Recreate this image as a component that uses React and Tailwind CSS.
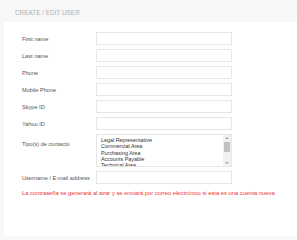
import React from "react";

const fields = ["First name", "Last name", "Phone", "Mobile Phone", "Skype ID", "Yahoo ID"];
const contactTypes = ["Legal Representative", "Commercial Area", "Purchasing Area", "Accounts Payable", "Technical Area"];

function Row({ label, children, top }) {
  return (
    <div className={`flex ${top ? "items-start" : "items-center"}`}>
      <div className={`w-[74px] text-[5.6px] text-[#555] ${top ? "pt-[6px]" : "pt-[2px]"}`}>{label}</div>
      {children}
    </div>
  );
}

function Input() {
  return <div className="h-[13px] w-[136px] border border-[#e6e6e6] bg-white" />;
}

function ContactList() {
  return (
    <div className="relative flex h-[33px] w-[136px] border border-[#e6e6e6] bg-white">
      <div className="flex-1 overflow-hidden pl-[4px] pt-[2px] text-[5.4px] leading-[6.3px] text-[#333]">
        {contactTypes.map((t) => (
          <div key={t} className="whitespace-nowrap">{t}</div>
        ))}
      </div>
      <div className="flex w-[8px] flex-col items-center bg-[#f1f1f1]">
        <div className="mt-[2px] h-0 w-0 border-x-[2px] border-b-[2px] border-x-transparent border-b-[#a3a3a3]" />
        <div className="mt-[3px] h-[10px] w-[6px] bg-[#c1c1c1]" />
        <div className="mt-auto mb-[2px] h-0 w-0 border-x-[2px] border-t-[2px] border-x-transparent border-t-[#a3a3a3]" />
      </div>
    </div>
  );
}

export default function App() {
  return (
    <div className="h-[240px] w-[297px] overflow-hidden bg-[#f7f7f7]" style={{ fontFamily: '"Liberation Sans", Arial, sans-serif' }}>
      <div className="h-[22px] pl-[15px] pt-[9px] text-[6.4px] uppercase leading-[7px] text-[#b0b0b0]">Create / Edit User</div>
      <div className="ml-[4px] h-[214px] bg-white pl-[18px] pt-[10px]">
        <div className="flex flex-col gap-[4px]">
          {fields.map((f) => (
            <Row key={f} label={f}>
              <Input />
            </Row>
          ))}
          <Row label="Tipo(s) de contacto" top>
            <ContactList />
          </Row>
          <Row label="Username / E-mail address">
            <Input />
          </Row>
        </div>
        <div className="mt-[5px] whitespace-nowrap text-[5.8px] text-[#f0323a]">
          La contraseña se generará al azar y se enviará por correo electrónico si esta es una cuenta nueva
        </div>
      </div>
    </div>
  );
}
